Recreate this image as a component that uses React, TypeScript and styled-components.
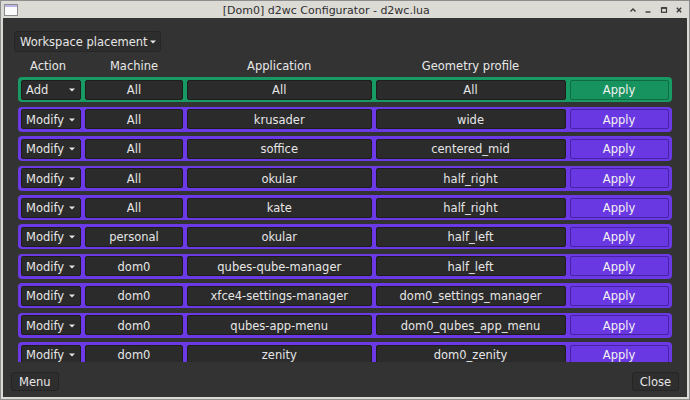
import { createGlobalStyle, styled } from "styled-components";

type RowKind = "add" | "modify";

interface RuleRow {
    kind: RowKind;
    machine: string;
    application: string;
    profile: string;
}

const rules: RuleRow[] = [
    { kind: "add", machine: "All", application: "All", profile: "All" },
    { kind: "modify", machine: "All", application: "krusader", profile: "wide" },
    { kind: "modify", machine: "All", application: "soffice", profile: "centered_mid" },
    { kind: "modify", machine: "All", application: "okular", profile: "half_right" },
    { kind: "modify", machine: "All", application: "kate", profile: "half_right" },
    { kind: "modify", machine: "personal", application: "okular", profile: "half_left" },
    { kind: "modify", machine: "dom0", application: "qubes-qube-manager", profile: "half_left" },
    { kind: "modify", machine: "dom0", application: "xfce4-settings-manager", profile: "dom0_settings_manager" },
    { kind: "modify", machine: "dom0", application: "qubes-app-menu", profile: "dom0_qubes_app_menu" },
    { kind: "modify", machine: "dom0", application: "zenity", profile: "dom0_zenity" },
];

const palette = {
    add: { row: "#189a64", button: "#17935f", edge: "#0f6b44" },
    modify: { row: "#6b3ae6", button: "#6a38e2", edge: "#4523a3" },
};


function Caret() {
    return (
        <svg width="6" height="4" viewBox="0 0 6 4">
            <path d="M0 0.5 L6 0.5 L3 3.5 Z" fill="#e8e8e8" />
        </svg>
    );
}


export default function App() {
    return (
        <>
            <GlobalStyle />
            <Window>
                <TitleBar>
                    <AppIcon width="14" height="12" viewBox="0 0 14 12">
                        <rect x="0.5" y="0.5" width="13" height="11" fill="#fbfbfb" stroke="#8c8c8c" />
                        <rect x="1" y="1" width="12" height="2" fill="#b9b6e8" />
                    </AppIcon>
                    <Title>{"[Dom0] d2wc Configurator - d2wc.lua"}</Title>
                    <Controls>
                        <svg width="8" height="8" viewBox="0 0 8 8">
                            <path d="M1.5 5.5 L4 3 L6.5 5.5" stroke="#3a3a3a" strokeWidth="1.4" fill="none" />
                        </svg>
                        <svg width="8" height="8" viewBox="0 0 8 8">
                            <path d="M1.5 6 L6.5 6" stroke="#3a3a3a" strokeWidth="1.4" />
                        </svg>
                        <svg width="8" height="8" viewBox="0 0 8 8">
                            <rect x="1.5" y="1.8" width="5" height="4.5" stroke="#3a3a3a" strokeWidth="1.2" fill="none" />
                            <path d="M1.5 2 L6.5 2" stroke="#3a3a3a" strokeWidth="1.6" />
                        </svg>
                        <svg width="8" height="8" viewBox="0 0 8 8">
                            <path d="M1.8 1.8 L6.2 6.2 M6.2 1.8 L1.8 6.2" stroke="#3a3a3a" strokeWidth="1.4" />
                        </svg>
                    </Controls>
                </TitleBar>

                <Body>
                    <Toolbar>
                        <ModeSelect>
                            {"Workspace placement"}
                            <Caret />
                        </ModeSelect>
                    </Toolbar>

                    <ScrollArea>
                        <HeaderGrid>
                            <HeaderCell $shift={-3}>{"Action"}</HeaderCell>
                            <HeaderCell>{"Machine"}</HeaderCell>
                            <HeaderCell>{"Application"}</HeaderCell>
                            <HeaderCell>{"Geometry profile"}</HeaderCell>
                            <span />
                        </HeaderGrid>
                        <RowList>
                            {rules.map((rule, i) => (
                                <RuleGrid key={i} $kind={rule.kind}>
                                    <ActionCell>
                                        {rule.kind === "add" ? "Add" : "Modify"}
                                        <Caret />
                                    </ActionCell>
                                    <Cell>{rule.machine}</Cell>
                                    <Cell>{rule.application}</Cell>
                                    <Cell>{rule.profile}</Cell>
                                    <ApplyButton $kind={rule.kind}>{"Apply"}</ApplyButton>
                                </RuleGrid>
                            ))}
                        </RowList>
                    </ScrollArea>

                    <Footer>
                        <FooterButton>{"Menu"}</FooterButton>
                        <FooterButton>{"Close"}</FooterButton>
                    </Footer>
                </Body>
            </Window>
        </>
    );
}


const GlobalStyle = createGlobalStyle`
    html, body {
        margin: 0;
        padding: 0;
        background: #dcdad5;
    }
    * {
        box-sizing: border-box;
    }
`;

const Window = styled.div`
    width: 690px;
    height: 400px;
    display: flex;
    flex-direction: column;
    border: 1px solid #8e8e8e;
    background: #dcdad5;
    padding: 0 2px 2px 2px;
    font-family: "DejaVu Sans", "Liberation Sans", sans-serif;
`;

const TitleBar = styled.div`
    height: 17px;
    display: flex;
    align-items: center;
    padding: 0 0 0 1px;
`;

const AppIcon = styled.svg`
    flex: none;
`;

const Title = styled.div`
    flex: 1;
    text-align: center;
    font-size: 11px;
    color: #2f2f2f;
    padding-left: 6px;
    padding-top: 1px;
`;

const Controls = styled.div`
    display: flex;
    align-items: center;
    gap: 7.5px;
    padding-right: 4px;
`;

const Body = styled.div`
    flex: 1;
    display: flex;
    flex-direction: column;
    background: #333333;
    padding-top: 13px;
    color: #e6e6e6;
    font-size: 11.5px;
    min-height: 0;
`;

const Toolbar = styled.div`
    display: flex;
    padding-left: 11px;
`;

const ModeSelect = styled.div`
    height: 21px;
    display: flex;
    align-items: center;
    gap: 2px;
    padding: 0 4px 0 5px;
    white-space: nowrap;
    background: #2d2d2d;
    border: 1px solid #262626;
    border-radius: 3px;
`;

const ScrollArea = styled.div`
    flex: 1;
    min-height: 0;
    overflow: hidden;
    margin-top: 2px;
    padding: 2px 15px 0 15px;
`;

const columns = "60px 98px 184.5px 190px 99px";

const HeaderGrid = styled.div`
    display: grid;
    grid-template-columns: ${columns};
    column-gap: 4px;
    padding: 0 3px;
    height: 20px;
    align-items: center;
`;

const HeaderCell = styled.div<{ $shift?: number }>`
    text-align: center;
    font-size: 11.5px;
    color: #e8e8e8;
    transform: translateX(${p => p.$shift ?? 0}px);
`;

const RowList = styled.div`
    display: flex;
    flex-direction: column;
    gap: 4.45px;
    margin-top: 1.3px;
`;

const RuleGrid = styled.div<{ $kind: RowKind }>`
    display: grid;
    grid-template-columns: ${columns};
    column-gap: 4px;
    height: 25px;
    padding: 2.5px 3px;
    border-radius: 4px;
    background: ${p => palette[p.$kind].row};
    flex: none;
`;

const Cell = styled.div`
    height: 20px;
    display: flex;
    align-items: center;
    justify-content: center;
    padding-top: 1px;
    background: #2b2b2b;
    border: 1px solid #1d1d1d;
    border-radius: 2px;
    white-space: nowrap;
    overflow: hidden;
`;

const ActionCell = styled(Cell)`
    justify-content: space-between;
    padding: 1px 5px 0 4px;
`;

const ApplyButton = styled.div<{ $kind: RowKind }>`
    height: 20px;
    display: flex;
    align-items: center;
    justify-content: center;
    padding-top: 1px;
    background: ${p => palette[p.$kind].button};
    border: 1px solid ${p => palette[p.$kind].edge};
    border-radius: 2px;
    color: #f2f2f2;
`;

const Footer = styled.div`
    display: flex;
    justify-content: space-between;
    padding: 10px 8px 6px 8px;
`;

const FooterButton = styled.div`
    height: 19px;
    display: flex;
    align-items: center;
    padding: 0 7px;
    background: #2e2e2e;
    border: 1px solid #252525;
    border-radius: 3px;
`;
